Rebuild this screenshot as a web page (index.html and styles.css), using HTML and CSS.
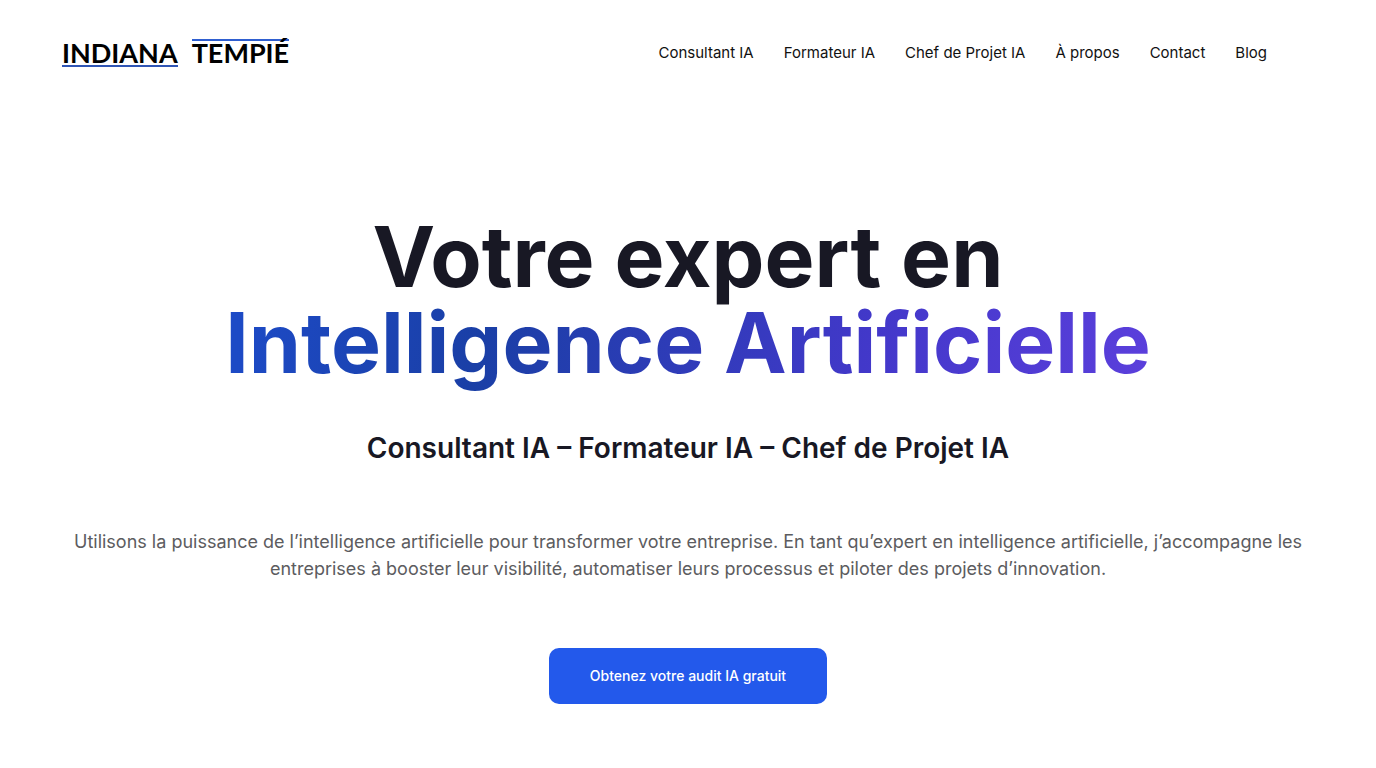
FILE: index.html
```html
<!DOCTYPE html>
<html lang="fr">

<head>
     <meta charset="UTF-8">
     <meta name="viewport" content="width=device-width, initial-scale=1">
     <title>Indiana Tempié</title>
     <link rel="stylesheet" href="styles.css">
</head>

<body>
     <header class="header">
          <a class="logo" href="#">
               <span class="logo-first">INDIANA</span>
               <span class="logo-last">TEMPIÉ</span>
          </a>
          <nav class="nav">
               <a href="#">Consultant IA</a>
               <a href="#">Formateur IA</a>
               <a href="#">Chef de Projet IA</a>
               <a href="#">À propos</a>
               <a href="#">Contact</a>
               <a href="#">Blog</a>
          </nav>
     </header>

     <main class="hero">
          <h1 class="title">Votre expert en<br><span class="gradient">Intelligence Artificielle</span></h1>
          <h2 class="subtitle">Consultant IA – Formateur IA – Chef de Projet IA</h2>
          <p class="intro">Utilisons la puissance de l’intelligence artificielle pour transformer votre entreprise. En tant qu’expert en intelligence artificielle, j’accompagne les entreprises à booster leur visibilité, automatiser leurs processus et piloter des projets d’innovation.</p>
          <button class="cta" type="button">Obtenez votre audit IA gratuit</button>
     </main>
</body>

</html>
```

FILE: styles.css
```css
* {
     box-sizing: border-box;
}

body {
     margin: 0;
     font-family: Inter, sans-serif;
     background-color: #fff;
     color: #181824;
}

.header {
     display: flex;
     align-items: center;
     justify-content: space-between;
     padding: 39px 109px 39px 62px;
}

.logo {
     display: flex;
     gap: 14px;
     font-family: Lato, sans-serif;
     font-size: 27px;
     font-weight: 700;
     line-height: 24px;
     color: #000;
     text-decoration: none;
}

.logo-first {
     border-bottom: 2px solid #2f55b5;
     border-top: 2px solid transparent;
}

.logo-last {
     border-top: 2px solid #2f5fd0;
     border-bottom: 2px solid transparent;
}

.nav {
     display: flex;
     gap: 30px;
}

.nav a {
     font-size: 15px;
     line-height: 24px;
     color: #111;
     text-decoration: none;
}

.hero {
     display: flex;
     flex-direction: column;
     align-items: center;
     padding: 108px 62px 64px;
     text-align: center;
}

.title {
     margin: 0;
     font-size: 84px;
     font-weight: 700;
     line-height: 86px;
}

.gradient {
     background: linear-gradient(100deg, #1d4bc8, #1a3fa6 28%, #4338ca 70%, #5b3fdc);
     background-clip: text;
     -webkit-background-clip: text;
     color: transparent;
}

.subtitle {
     margin: 42px 0 0;
     font-size: 28px;
     font-weight: 600;
     line-height: 40px;
}

.intro {
     margin: 60px 0 0;
     font-size: 18px;
     line-height: 27px;
     color: #5c5c60;
}

.cta {
     margin-top: 66px;
     padding: 19px 41px;
     border: none;
     border-radius: 10px;
     background-color: #2359eb;
     color: #fff;
     font-family: inherit;
     font-size: 14px;
     font-weight: 500;
     line-height: 18px;
     cursor: pointer;
}
```
